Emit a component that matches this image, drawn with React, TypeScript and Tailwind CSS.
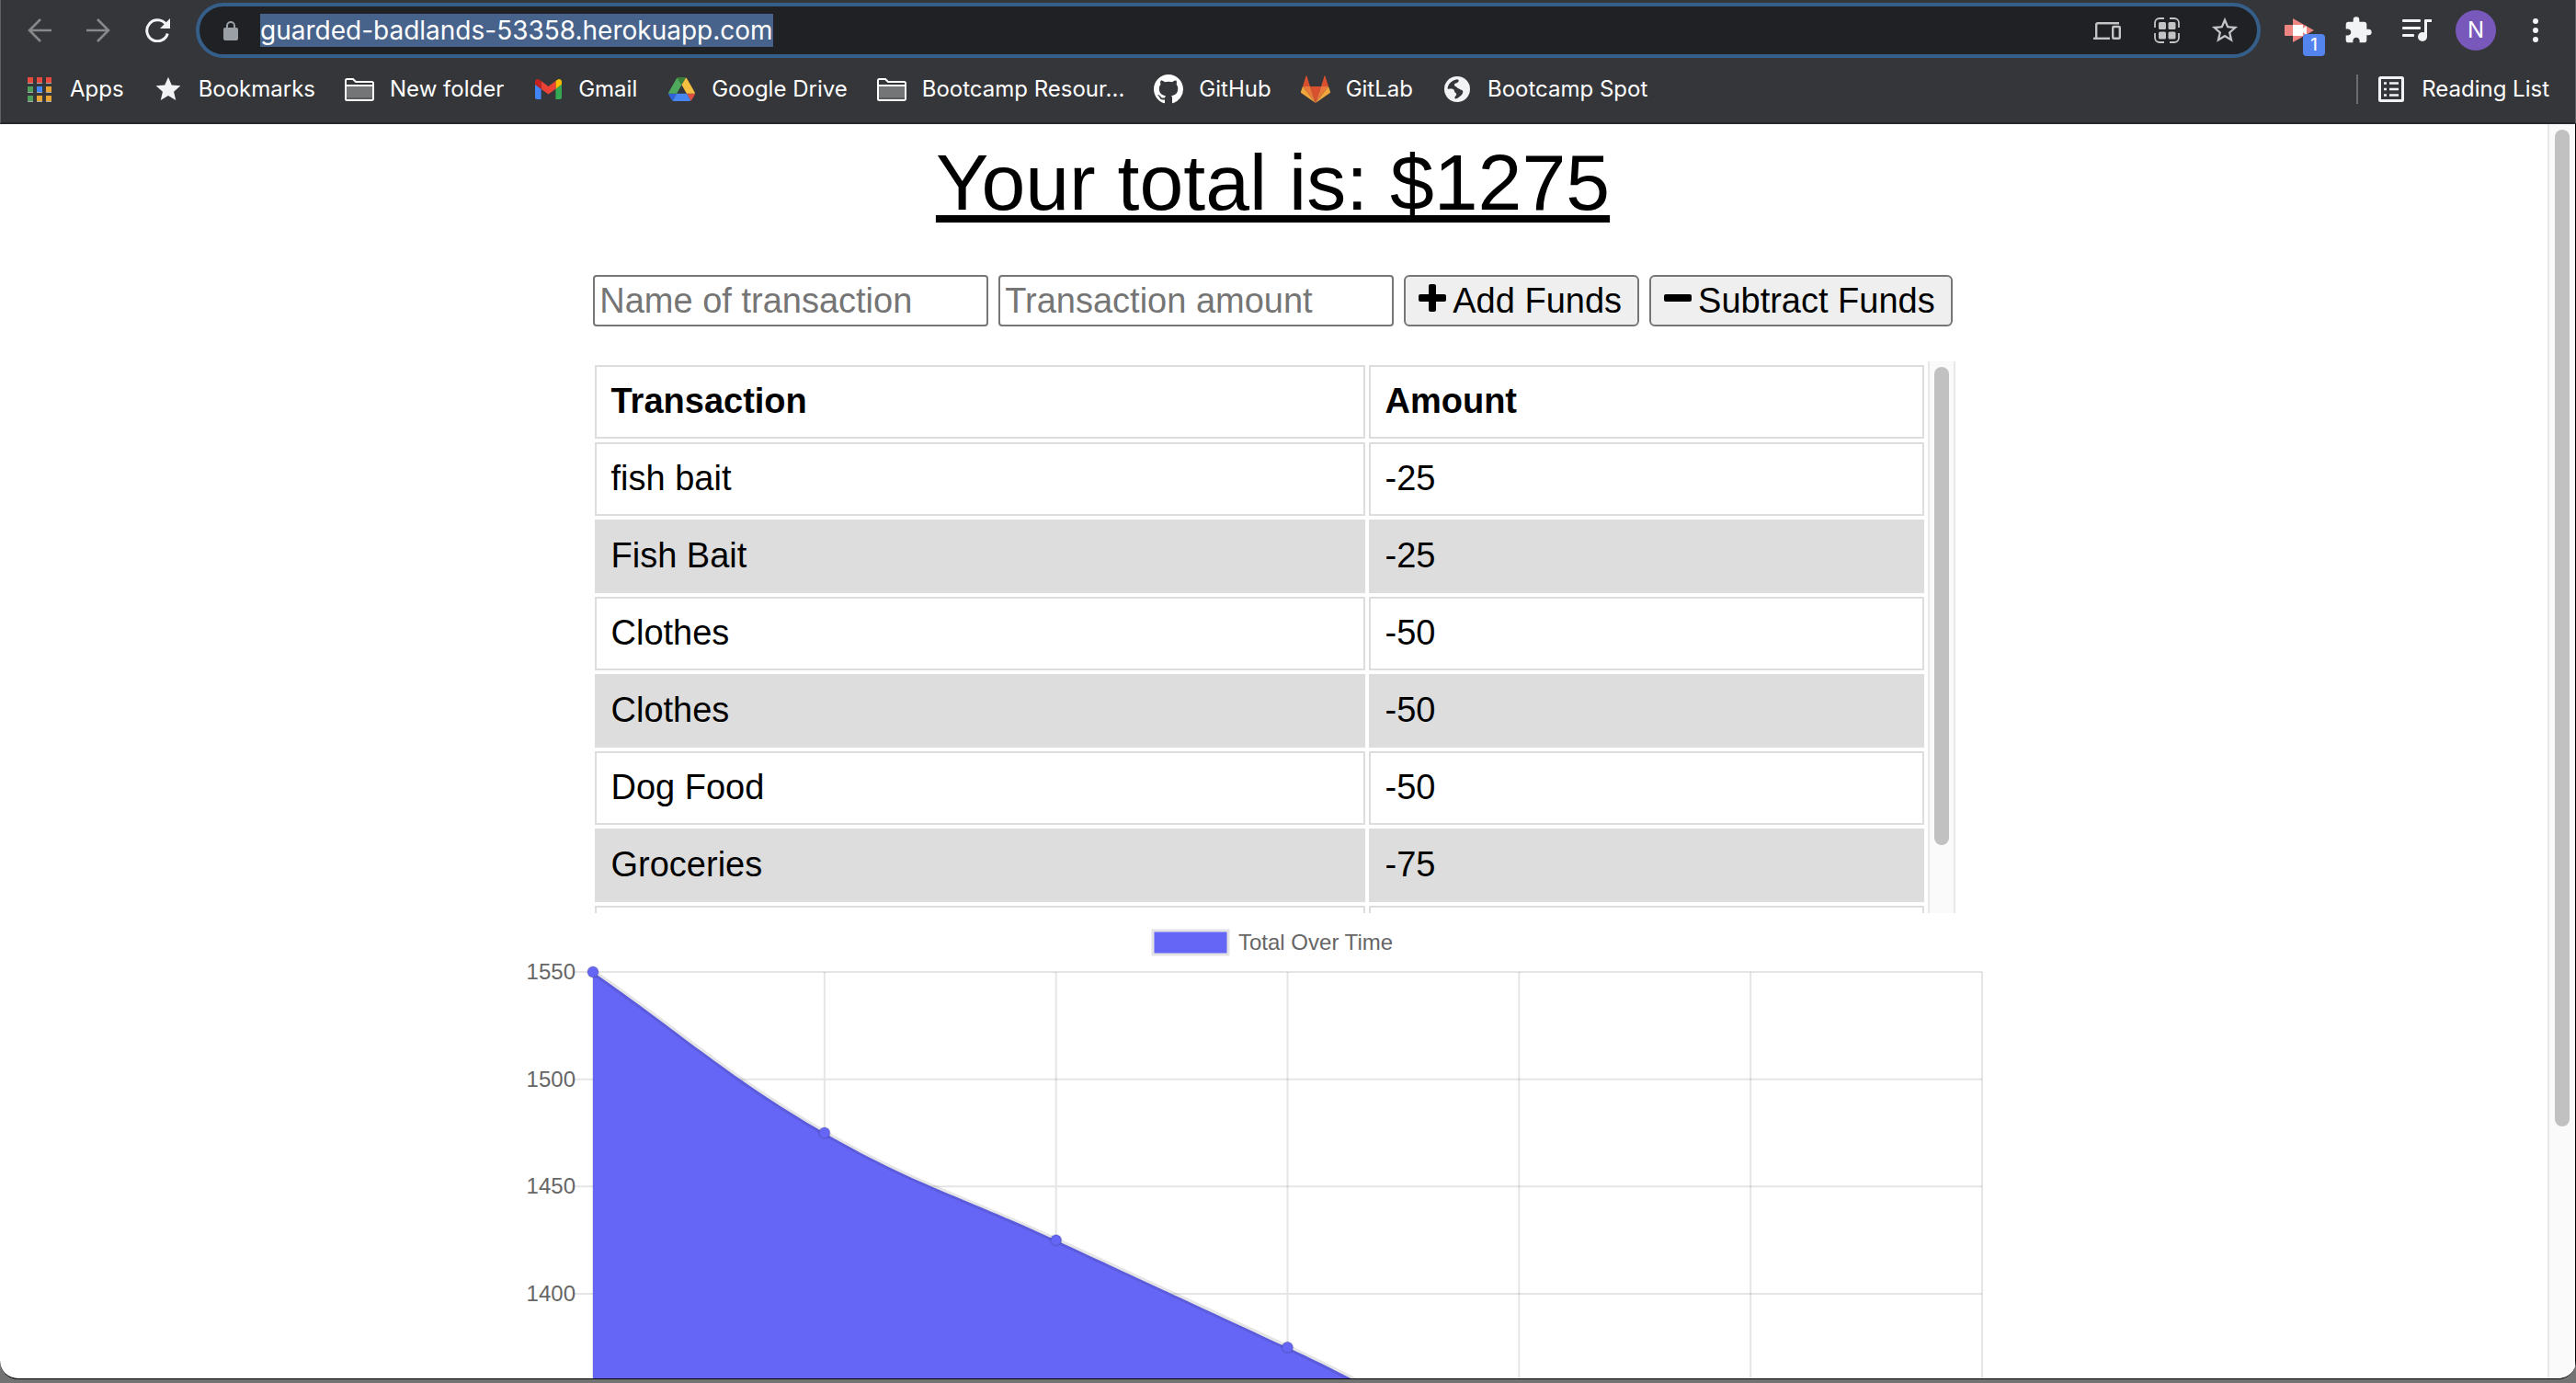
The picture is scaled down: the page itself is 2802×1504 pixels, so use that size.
import type { ReactNode } from "react";
import { MdExtension, MdStar, MdStarBorder } from "react-icons/md";

/* ---------- toolbar icons ---------- */

const BackIcon = () => (
  <svg viewBox="0 0 26 26" className="size-[26px]" fill="none" stroke="#87888a" strokeWidth="2.6" aria-hidden="true">
    <path d="M26 13H2M14 1 2 13l12 12" />
  </svg>
);

const ForwardIcon = () => (
  <svg viewBox="0 0 26 26" className="size-[26px]" fill="none" stroke="#87888a" strokeWidth="2.6" aria-hidden="true">
    <path d="M0 13h24M12 1l12 12-12 12" />
  </svg>
);

const ReloadIcon = () => (
  <svg viewBox="0 0 27 26" className="h-[26px] w-[27px]" aria-hidden="true">
    <path d="M22.5 6.4A11.5 11.5 0 1 0 24.3 16.5" fill="none" stroke="#f1f3f4" strokeWidth="3" />
    <path d="M27 0v11H16z" fill="#f1f3f4" />
  </svg>
);

const LockIcon = () => (
  <svg viewBox="0 0 16 21" className="h-[21px] w-4 shrink-0" aria-hidden="true">
    <rect y="7" width="16" height="14" rx="2" fill="#9aa0a6" />
    <path d="M4 8V5a4 4 0 0 1 8 0v3" fill="none" stroke="#9aa0a6" strokeWidth="2" />
  </svg>
);

const DevicesIcon = () => (
  <svg viewBox="0 0 30 19" className="h-[19px] w-[30px]" fill="none" stroke="#c3c4c6" strokeWidth="2.4" aria-hidden="true">
    <path d="M28 1.2H4.700a1.500 1.500 0 0 0-1.500 1.500V17" />
    <path d="M0 17.800h18" />
    <rect x="21.200" y="5" width="7.600" height="12.800" rx="1" />
  </svg>
);

const QrIcon = () => (
  <svg viewBox="0 0 28 28" className="size-7" aria-hidden="true">
    <path
      d="M1 11V6a5 5 0 0 1 5-5h5M17 1h5a5 5 0 0 1 5 5v5M27 17v5a5 5 0 0 1-5 5h-5M11 27H6a5 5 0 0 1-5-5v-5"
      fill="none"
      stroke="#c3c4c6"
      strokeWidth="1.8"
    />
    <g fill="#c3c4c6">
      <rect x="5" y="5" width="8" height="8" rx="1.500" />
      <rect x="15.500" y="5" width="8" height="8" rx="1.500" />
      <rect x="5" y="15.500" width="8" height="8" rx="1.500" />
      <rect x="15.500" y="15.500" width="8" height="8" rx="1.500" />
    </g>
  </svg>
);

const RecorderIcon = () => (
  <svg viewBox="0 0 32 26" className="h-[26px] w-8" aria-hidden="true">
    <path d="M9 0 32 13 9 26z" fill="#ee8581" />
    <rect y="7" width="9" height="12" rx="1" fill="#ee8581" />
    <path d="M9 7h11v4l4-3v10l-4-3v4H9z" fill="#fff" />
  </svg>
);

const PlaylistIcon = () => (
  <svg viewBox="0 0 32 25" className="h-[25px] w-8" fill="#f1f3f4" aria-hidden="true">
    <rect width="20" height="3" rx="1" />
    <rect y="8" width="20" height="3" rx="1" />
    <rect y="16" width="13" height="3" rx="1" />
    <circle cx="22" cy="19" r="5" />
    <path d="M24 19V1a1 1 0 0 1 1-1h7v3h-5v16z" />
  </svg>
);

const DotsIcon = () => (
  <svg viewBox="0 0 6 26" className="h-[26px] w-1.5" fill="#f1f3f4" aria-hidden="true">
    <circle cx="3" cy="3" r="3" />
    <circle cx="3" cy="13" r="3" />
    <circle cx="3" cy="23" r="3" />
  </svg>
);

/* ---------- bookmark icons ---------- */

const APP_DOTS = [
  ["#e8493f", "#e8493f", "#e8493f"],
  ["#4f9e5b", "#4285f4", "#e8a334"],
  ["#4f9e5b", "#e8a334", "#e8a334"],
];

const AppsIcon = () => (
  <svg viewBox="0 0 26 27" className="h-[27px] w-[26px]" aria-hidden="true">
    {APP_DOTS.map((row, y) =>
      row.map((fill, x) => (
        <g key={`${x}-${y}`}>
          <rect x={x * 10} y={y * 10} width="6" height="7" fill="#a9a9a9" />
          <rect x={x * 10} y={y * 10} width="6" height="6" fill={fill} />
        </g>
      )),
    )}
  </svg>
);

const FolderIcon = () => (
  <svg viewBox="0 0 32 25" className="h-[25px] w-8" aria-hidden="true">
    <path d="M2 8h28v15H2z" fill="#747577" />
    <path d="M2 21h28v2H2z" fill="#5a5b5e" />
    <path
      d="M1 2.500A1.500 1.500 0 0 1 2.500 1H9l3 3h17.500A1.500 1.500 0 0 1 31 5.500v17a1.500 1.500 0 0 1-1.500 1.500h-27A1.500 1.500 0 0 1 1 22.500zM1 8h30"
      fill="none"
      stroke="#fff"
      strokeWidth="2"
    />
  </svg>
);

const GmailIcon = () => (
  <svg viewBox="52 42 88 66" className="h-[22px] w-[29px]" aria-hidden="true">
    <path fill="#4285f4" d="M58 108h14V74L52 59v43c0 3.320 2.690 6 6 6" />
    <path fill="#34a853" d="M120 108h14c3.320 0 6-2.690 6-6V59l-20 15" />
    <path fill="#fbbc04" d="M120 48v26l20-15v-8c0-7.420-8.470-11.650-14.400-7.200" />
    <path fill="#ea4335" d="M72 74V48l24 18 24-18v26L96 92" />
    <path fill="#c5221f" d="M52 51v8l20 15V48l-5.600-4.200c-5.940-4.450-14.400-.22-14.400 7.200" />
  </svg>
);

const DriveIcon = () => (
  <svg viewBox="0 0 87.3 78" className="h-[26px] w-[29px]" aria-hidden="true">
    <path fill="#2f62d9" d="m6.6 66.85 3.85 6.65c.8 1.4 1.95 2.5 3.3 3.3l13.75-23.8h-27.5c0 1.55.4 3.1 1.2 4.5z" />
    <path fill="#4fa95c" d="m43.65 25-13.75-23.8c-1.35.8-2.5 1.9-3.3 3.3l-25.4 44a9.06 9.06 0 0 0-1.2 4.5h27.5z" />
    <path fill="#df4f40" d="m73.55 76.8c1.35-.8 2.5-1.9 3.3-3.3l1.6-2.75 7.65-13.25c.8-1.4 1.2-2.95 1.2-4.5h-27.5l5.85 11.5z" />
    <path fill="#3a7d3a" d="m43.65 25 13.75-23.8c-1.35-.8-2.9-1.2-4.5-1.2h-18.5c-1.6 0-3.15.45-4.5 1.2z" />
    <path fill="#4a86f0" d="m59.8 53h-32.3l-13.75 23.8c1.35.8 2.9 1.2 4.5 1.2h50.8c1.6 0 3.15-.45 4.5-1.2z" />
    <path fill="#f5bf42" d="m73.4 26.5-12.7-22c-.8-1.4-1.95-2.5-3.3-3.3l-13.75 23.8 16.15 28h27.45c0-1.55-.4-3.1-1.2-4.5z" />
  </svg>
);

const GitHubIcon = () => (
  <svg viewBox="0 0 16 16" className="size-8" fill="#fff" aria-hidden="true">
    <path d="M8 0C3.58 0 0 3.58 0 8c0 3.54 2.29 6.53 5.47 7.59.4.07.55-.17.55-.38 0-.19-.01-.82-.01-1.49-2.01.37-2.53-.49-2.69-.94-.09-.23-.48-.94-.82-1.13-.28-.15-.68-.52-.01-.53.63-.01 1.08.58 1.23.82.72 1.21 1.87.87 2.33.66.07-.52.28-.87.51-1.07-1.78-.2-3.64-.89-3.64-3.95 0-.87.31-1.59.82-2.15-.08-.2-.36-1.02.08-2.12 0 0 .67-.21 2.2.82.64-.18 1.32-.27 2-.27s1.36.09 2 .27c1.53-1.04 2.2-.82 2.2-.82.44 1.1.16 1.92.08 2.12.51.56.82 1.27.82 2.15 0 3.07-1.87 3.75-3.65 3.95.29.25.54.73.54 1.48 0 1.07-.01 1.93-.01 2.2 0 .21.15.46.55.38A8.01 8.01 0 0 0 16 8c0-4.42-3.58-8-8-8z" />
  </svg>
);

const GitLabIcon = () => (
  <svg viewBox="0 0 32 30" className="h-[30px] w-8" aria-hidden="true">
    <path d="M16 30 10 12h12z" fill="#d9502f" />
    <path d="M16 30 10 12H2z" fill="#e9783a" />
    <path d="M16 30 22 12h8z" fill="#e9783a" />
    <path d="M2 12 0 17.500q-.3 1 .6 1.700L16 30z" fill="#f0a63c" />
    <path d="M30 12l2 5.500q.3 1-.6 1.700L16 30z" fill="#f0a63c" />
    <path d="M2 12 5.500.8q.5-1 1 0L10 12z" fill="#d9502f" />
    <path d="M30 12 26.500.8q-.5-1-1 0L22 12z" fill="#d9502f" />
  </svg>
);

const GlobeIcon = () => (
  <svg viewBox="0 0 28 28" className="size-7" aria-hidden="true">
    <circle cx="14" cy="14" r="14" fill="#f1f3f4" />
    <path
      d="M3.500 13.500C4 8 8.500 4 14 3.200c2 .3 2.200 1.600 1.200 2.800-1.400 1.600-4 1.200-4.200 3.200s2.600 1.300 3 3.300c1.800.2 2.200 2 4.500 2.300 2.600.3 2.200 4.300-.5 6.200-1.600 1.400-3.500 3.200-6 3.500-1.200-.8-.6-2.300.4-3.200 1.400-1.300.8-2.600-.4-3.500-1.600-1.400-.4-3-2.500-3.800s-4.500 0-6-.5z"
      fill="#35363a"
    />
    <path d="M17.500 3c3 .8 5.500 3 7 6.500-1 2.500-4.500 3.500-6 2s-3-1.500-3-3.500 2-2.500 2-5z" fill="#f1f3f4" />
  </svg>
);

const ReadingListIcon = () => (
  <svg viewBox="0 0 28 28" className="size-7" aria-hidden="true">
    <rect x="1.500" y="1.500" width="25" height="25" rx="1" fill="none" stroke="#f1f3f4" strokeWidth="3" />
    <path
      d="M6 7.500h3M12 7.500h10M6 14h3M12 14h10M6 20.500h3M12 20.500h10"
      stroke="#f1f3f4"
      strokeWidth="2.600"
    />
  </svg>
);

/* ---------- form icons ---------- */

const PlusIcon = () => (
  <svg viewBox="0 0 30 30" className="mb-1.5 size-[30px] shrink-0" aria-hidden="true">
    <rect y="11" width="30" height="8" rx="2" />
    <rect x="11" width="8" height="30" rx="2" />
  </svg>
);

const MinusIcon = () => (
  <svg viewBox="0 0 30 30" className="mb-1.5 size-[30px] shrink-0" aria-hidden="true">
    <rect y="11" width="30" height="8" rx="2" />
  </svg>
);

/* ---------- browser frame ---------- */

const BOOKMARKS: { label: string; icon: ReactNode }[] = [
  { label: "Apps", icon: <AppsIcon /> },
  { label: "Bookmarks", icon: <MdStar className="size-8 shrink-0 text-[#f1f3f4]" /> },
  { label: "New folder", icon: <FolderIcon /> },
  { label: "Gmail", icon: <GmailIcon /> },
  { label: "Google Drive", icon: <DriveIcon /> },
  { label: "Bootcamp Resour...", icon: <FolderIcon /> },
  { label: "GitHub", icon: <GitHubIcon /> },
  { label: "GitLab", icon: <GitLabIcon /> },
  { label: "Bootcamp Spot", icon: <GlobeIcon /> },
];

const BookmarkLink = ({ label, icon }: { label: string; icon: ReactNode }) => (
  <a href="#" className="flex items-center gap-[17px] whitespace-nowrap">
    <span className="flex w-8 justify-center">{icon}</span>
    {label}
  </a>
);

const Toolbar = () => (
  <div className="flex h-[66px] items-center pr-10 pl-[29px]">
    <div className="flex shrink-0 items-center gap-[38px]">
      <button type="button" aria-label="Back">
        <BackIcon />
      </button>
      <button type="button" aria-label="Forward">
        <ForwardIcon />
      </button>
      <button type="button" aria-label="Reload">
        <ReloadIcon />
      </button>
    </div>
    <div className="ml-7 flex h-[60px] min-w-0 flex-1 items-center rounded-full border-4 border-[#355e88] bg-[#202124] pr-[18px] pl-[26px]">
      <LockIcon />
      <input
        aria-label="Address"
        defaultValue="guarded-badlands-53358.herokuapp.com"
        className="ml-6 field-sizing-content h-9 bg-[#48638b] text-[28px] leading-9 text-white outline-none"
      />
      <div className="ml-auto flex items-center gap-8">
        <button type="button" aria-label="Send to your devices" className="mr-1">
          <DevicesIcon />
        </button>
        <button type="button" aria-label="Create QR code">
          <QrIcon />
        </button>
        <button type="button" aria-label="Bookmark this page">
          <MdStarBorder className="size-[34px] text-[#c3c4c6]" />
        </button>
      </div>
    </div>
    <div className="ml-[26px] flex shrink-0 items-center">
      <button type="button" aria-label="Recorder, 1 notification" className="relative">
        <RecorderIcon />
        <span className="absolute top-[17px] left-5 flex size-6 items-center justify-center rounded bg-[#5484ee] text-lg leading-6 font-medium text-white">
          1
        </span>
      </button>
      <button type="button" aria-label="Extensions" className="ml-8">
        <MdExtension className="size-8 text-[#f1f3f4]" />
      </button>
      <button type="button" aria-label="Media controls" className="ml-8">
        <PlaylistIcon />
      </button>
      <button
        type="button"
        aria-label="Profile"
        className="ml-[26px] size-11 rounded-full bg-[#7858ba] text-2xl leading-none text-white"
      >
        N
      </button>
      <button type="button" aria-label="Menu" className="ml-10">
        <DotsIcon />
      </button>
    </div>
  </div>
);

const BookmarksBar = () => (
  <nav
    aria-label="Bookmarks"
    className="flex h-[67px] items-start justify-between pr-7 pl-[26px] text-2xl leading-8 text-white"
  >
    <div className="flex gap-8 pt-[15px]">
      {BOOKMARKS.map((b) => (
        <BookmarkLink key={b.label} {...b} />
      ))}
    </div>
    <div className="flex pt-[15px]">
      <span className="mr-5 w-0.5 bg-[#6b6c6f]" />
      <BookmarkLink label="Reading List" icon={<ReadingListIcon />} />
    </div>
  </nav>
);

/* ---------- page ---------- */

const TRANSACTIONS = [
  { name: "fish bait", amount: "-25" },
  { name: "Fish Bait", amount: "-25" },
  { name: "Clothes", amount: "-50" },
  { name: "Clothes", amount: "-50" },
  { name: "Dog Food", amount: "-50" },
  { name: "Groceries", amount: "-75" },
  { name: "", amount: "" },
];

const CELL = "h-20 border-2 border-[#ddd] px-4 pt-[15px] pb-[17px] text-left";
const FIELD = "h-14 w-[430px] rounded border-2 border-[#767676] px-[5px] placeholder:text-[#757575]";
const ACTION =
  "flex h-14 items-center gap-[7px] rounded-md border-2 border-[#767676] bg-[#efefef] pr-[17px] pl-3.5 whitespace-nowrap";

const TransactionForm = () => (
  <form className="mt-[51px] flex justify-center gap-[11px]" onSubmit={(e) => e.preventDefault()}>
    <input aria-label="Name of transaction" placeholder="Name of transaction" className={FIELD} />
    <input aria-label="Transaction amount" placeholder="Transaction amount" className={FIELD} />
    <button type="button" className={ACTION}>
      <PlusIcon />
      Add Funds
    </button>
    <button type="button" className={ACTION}>
      <MinusIcon />
      Subtract Funds
    </button>
  </form>
);

const TransactionTable = () => (
  <div className="mx-auto mt-[38px] flex h-[600px] w-full max-w-[1484px] overflow-hidden">
    <div className="min-w-0 flex-1">
      <table className="w-full table-fixed border-separate border-spacing-1">
        <colgroup>
          <col className="w-[838px]" />
          <col />
        </colgroup>
        <thead>
          <tr>
            <th className={CELL}>Transaction</th>
            <th className={CELL}>Amount</th>
          </tr>
        </thead>
        <tbody>
          {TRANSACTIONS.map((t, i) => (
            <tr key={i} className="even:bg-[#ddd]">
              <td className={CELL}>{t.name}</td>
              <td className={CELL}>{t.amount}</td>
            </tr>
          ))}
        </tbody>
      </table>
    </div>
    <div className="flex w-[30px] justify-center border-x-2 border-[#e8e8e8] bg-[#fafafa] pt-1.5">
      <div className="h-[520px] w-4 rounded-full bg-[#c1c1c1]" />
    </div>
  </div>
);

const LEFT = 76;
const RIGHT = 1587;
const TOP = 64;
const BOTTOM = 764;
const STEP_X = (RIGHT - LEFT) / 6;
const STEP_Y = (BOTTOM - TOP) / 6;
const GRID = [0, 1, 2, 3, 4, 5, 6];
const TICKS = [1550, 1500, 1450, 1400];
const BALANCES = [1550, 1475, 1425, 1375, 1325, 1300, 1275];
const POINTS = BALANCES.map((v, i) => ({
  x: LEFT + i * STEP_X,
  y: TOP + ((1550 - v) / 50) * STEP_Y,
}));

/* Smooth spline through the points, tension 0.4. */
function spline(points: { x: number; y: number }[]) {
  const handles = points.map((p, i) => {
    const a = points[i - 1] ?? p;
    const b = points[i + 1] ?? p;
    const da = Math.hypot(p.x - a.x, p.y - a.y);
    const db = Math.hypot(b.x - p.x, b.y - p.y);
    const fa = (0.4 * da) / (da + db);
    const fb = (0.4 * db) / (da + db);
    return {
      inX: p.x - fa * (b.x - a.x),
      inY: p.y - fa * (b.y - a.y),
      outX: p.x + fb * (b.x - a.x),
      outY: p.y + fb * (b.y - a.y),
    };
  });
  return points
    .map((p, i) => {
      if (i === 0) return `M${p.x} ${p.y}`;
      const h = handles[i - 1];
      const k = handles[i];
      return `C${h.outX} ${h.outY} ${k.inX} ${k.inY} ${p.x} ${p.y}`;
    })
    .join("");
}

const CURVE = spline(POINTS);

const BalanceChart = () => (
  <svg
    viewBox="0 0 1632 780"
    className="mx-auto block w-full max-w-[1632px]"
    role="img"
    aria-label="Total Over Time"
    fontSize="24"
    fill="#666"
  >
    <g stroke="#000" strokeOpacity="0.1" strokeWidth="2">
      {GRID.map((i) => (
        <path key={i} d={`M${LEFT - 20} ${TOP + i * STEP_Y}H${RIGHT}M${LEFT + i * STEP_X} ${TOP}V${BOTTOM}`} />
      ))}
    </g>
    {TICKS.map((value, i) => (
      <text key={value} x={LEFT - 19} y={TOP + i * STEP_Y + 8} textAnchor="end">
        {value}
      </text>
    ))}
    <path d={`${CURVE}V${BOTTOM}H${LEFT}z`} fill="#6666f6" />
    <path d={CURVE} fill="none" stroke="#000" strokeOpacity="0.1" strokeWidth="6" />
    {POINTS.map((p) => (
      <circle key={p.x} cx={p.x} cy={p.y} r="6" fill="#6666f6" stroke="#000" strokeOpacity="0.1" strokeWidth="2" />
    ))}
    <rect x="685" y="19" width="82" height="26" fill="#6666f6" stroke="#e3e3e6" strokeWidth="3" />
    <text x="778" y="40">
      Total Over Time
    </text>
  </svg>
);

export default function App() {
  return (
    <div className="h-screen bg-[#737373] pb-1">
      <div className="flex h-full flex-col overflow-hidden rounded-b-[20px] border-b border-black bg-white font-['Liberation_Sans',Arial,sans-serif] text-[38px] leading-[44px] text-black">
        <header className="shrink-0 border-x border-b-2 border-x-[#5f6063] border-b-[#28292c] bg-[#35363a] font-[Inter,sans-serif]">
          <Toolbar />
          <BookmarksBar />
        </header>
        <div className="flex min-h-0 flex-1 border-r border-black">
          <main className="min-w-0 flex-1 overflow-hidden pr-0.5">
            <h1 className="mt-[13px] text-center text-[86px] leading-[100px] underline decoration-8 underline-offset-[6px]">
              Your total is: $1275
            </h1>
            <TransactionForm />
            <TransactionTable />
            <BalanceChart />
          </main>
          <div className="flex w-[30px] shrink-0 justify-center border-l-2 border-[#e8e8e8] bg-[#fafafa] pt-1.5">
            <div className="h-[1084px] w-4 rounded-full bg-[#c1c1c1]" />
          </div>
        </div>
      </div>
    </div>
  );
}
